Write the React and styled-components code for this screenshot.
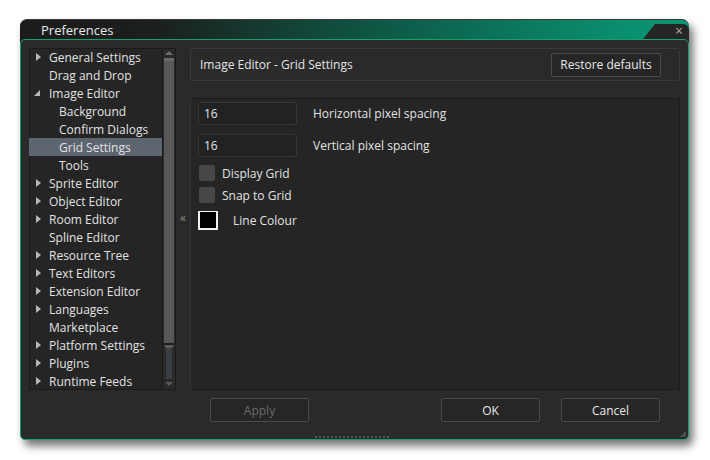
import React from "react";
import styled, { createGlobalStyle } from "styled-components";

const GlobalStyle = createGlobalStyle`
  html, body {
    margin: 0;
    padding: 0;
    background: #ffffff;
  }
  body {
    font-family: "Open Sans", "DejaVu Sans", sans-serif;
    font-size: 12px;
  }
`;

const Page = styled.div`
  width: 710px;
  height: 460px;
  padding: 19px 0 0 20px;
  box-sizing: border-box;
`;

const Window = styled.div`
  width: 669px;
  height: 421px;
  display: flex;
  flex-direction: column;
  border-radius: 7px 7px 6px 6px;
  box-shadow: 4px 6px 9px rgba(0, 0, 0, 0.55);
`;

const TitleBar = styled.div`
  position: relative;
  height: 27px;
  margin-bottom: -7px;
  padding-left: 21px;
  box-sizing: border-box;
  border-radius: 7px 7px 0 0;
  background: linear-gradient(to right, #1b1b1b 0%, #1b1f1e 20%, #0d5a47 55%, #0a8f6e 90%, #0b9572 100%);
  border-top: 1px solid #3a3a3a;
`;

const Title = styled.div`
  color: #e8e8e8;
  font-size: 13px;
  line-height: 21px;
`;

const CloseTab = styled.div`
  position: absolute;
  right: 0;
  top: 4px;
  width: 50px;
  height: 20px;
  background: #252525;
  border-top-right-radius: 6px;
  clip-path: polygon(16px 0, 100% 0, 100% 100%, 0 100%);
  color: #a8a8a8;
  font-size: 14px;
  line-height: 14px;
  text-align: right;
  padding-right: 6px;
  box-sizing: border-box;
`;

const Body = styled.div`
  position: relative;
  flex: 1;
  display: flex;
  flex-direction: column;
  background: #2a2a2a;
  border: 1px solid #17a06c;
  border-radius: 5px;
  padding: 8px 8px 0 8px;
`;

const Main = styled.div`
  display: flex;
  height: 342px;
`;

const Tree = styled.div`
  width: 147px;
  display: flex;
  background: #252525;
  box-shadow: inset 0 0 0 1px #1b1b1b;
`;

const TreeList = styled.div`
  flex: 1;
`;

const Row = styled.div`
  height: 18px;
  display: flex;
  align-items: center;
  padding-left: ${(p) => (p.child ? 30 : 20)}px;
  position: relative;
  color: #e2e2e2;
  background: ${(p) => (p.selected ? "#5d6571" : "transparent")};
  white-space: nowrap;
`;

const Arrow = styled.span`
  position: absolute;
  left: 7px;
  top: 5px;
  width: 0;
  height: 0;
  border-top: 4px solid transparent;
  border-bottom: 4px solid transparent;
  border-left: 5px solid #b8b8b8;
`;

const OpenArrow = styled.span`
  position: absolute;
  left: 5px;
  top: 6px;
  width: 0;
  height: 0;
  border-left: 6px solid transparent;
  border-bottom: 6px solid #b8b8b8;
`;

const ScrollBar = styled.div`
  width: 12px;
  display: flex;
  flex-direction: column;
  align-items: center;
  background: #2a2a2a;
  border: 1px solid #1b1b1b;
`;

const ScrollUp = styled.div`
  margin-top: 2px;
  width: 0;
  height: 0;
  border-left: 4px solid transparent;
  border-right: 4px solid transparent;
  border-bottom: 4px solid #6c6c6c;
`;

const ScrollDown = styled.div`
  margin: 3px 0 3px;
  width: 0;
  height: 0;
  border-left: 4px solid transparent;
  border-right: 4px solid transparent;
  border-top: 4px solid #5a5a5a;
`;

const Thumb = styled.div`
  margin-top: 3px;
  width: 10px;
  height: 287px;
  background: #585858;
  border-top: 3px solid #6a6a6a;
  border-bottom: 2px solid #1e1e1e;
  box-sizing: border-box;
`;

const TrackRest = styled.div`
  flex: 1;
  width: 10px;
  background: #3a3f46;
  border-top: 3px solid #5c5c5c;
  box-sizing: border-box;
  border-left: 2px solid #2a2a2a;
  border-right: 2px solid #2a2a2a;
`;

const Splitter = styled.div`
  width: 14px;
  display: flex;
  align-items: center;
  justify-content: center;
  color: #8a8a8a;
  font-size: 12px;
  padding-bottom: 4px;
`;

const RightCol = styled.div`
  width: 490px;
  display: flex;
  flex-direction: column;
  gap: 17px;
`;

const Header = styled.div`
  height: 33px;
  display: flex;
  align-items: center;
  justify-content: space-between;
  padding: 0 18px 0 9px;
  border: 1px solid #3a3a3a;
  border-radius: 2px;
  box-sizing: border-box;
  color: #e2e2e2;
`;

const Button = styled.button`
  width: ${(p) => p.w || 99}px;
  height: 24px;
  background: #262626;
  border: 1px solid #4a4a4a;
  border-radius: 2px;
  color: ${(p) => (p.disabled ? "#6a6a6a" : "#e8e8e8")};
  font-family: "Open Sans", "DejaVu Sans", sans-serif;
  font-size: 12px;
  padding: 0;
`;

const Content = styled.div`
  flex: 1;
  background: #252525;
  border: 1px solid #1b1b1b;
  border-left-color: #343434;
  box-sizing: border-box;
  padding: 3px 7px;
  display: flex;
  flex-direction: column;
`;

const FieldRow = styled.div`
  display: flex;
  align-items: center;
  height: 23px;
  margin-bottom: 9px;
  color: #e2e2e2;
`;

const Input = styled.div`
  width: 99px;
  height: 23px;
  box-sizing: border-box;
  background: #222222;
  border: 1px solid #363636;
  border-radius: 2px;
  padding-left: 5px;
  display: flex;
  align-items: center;
  color: #e2e2e2;
  margin-right: 16px;
`;

const CheckRow = styled.div`
  display: flex;
  align-items: center;
  height: 22px;
  color: #e2e2e2;
  margin-top: ${(p) => p.top || 0}px;
`;

const Box = styled.div`
  width: 16px;
  height: 16px;
  margin-left: 1px;
  margin-right: 7px;
  background: #474747;
  border-radius: 2px;
`;

const Swatch = styled.div`
  width: 20px;
  height: 19px;
  box-sizing: border-box;
  background: #000;
  border: 2px solid #f2f2f2;
  border-top-width: 1px;
  margin-right: 15px;
`;

const Footer = styled.div`
  display: flex;
  align-items: center;
  padding: 8px 20px 0 181px;
  gap: 21px;
`;

const Spacer = styled.div`
  flex: 1;
`;

const Grip = styled.div`
  position: absolute;
  left: 294px;
  bottom: 1px;
  width: 76px;
  height: 2px;
  background: repeating-linear-gradient(to right, #555 0 2px, transparent 2px 4px);
`;

const Corner = styled.div`
  position: absolute;
  right: 2px;
  bottom: 2px;
  width: 6px;
  height: 6px;
  background: linear-gradient(135deg, transparent 50%, #4a4a4a 50%);
`;

const items = [
  { label: "General Settings", arrow: true },
  { label: "Drag and Drop" },
  { label: "Image Editor", open: true },
  { label: "Background", child: true },
  { label: "Confirm Dialogs", child: true },
  { label: "Grid Settings", child: true, selected: true },
  { label: "Tools", child: true },
  { label: "Sprite Editor", arrow: true },
  { label: "Object Editor", arrow: true },
  { label: "Room Editor", arrow: true },
  { label: "Spline Editor" },
  { label: "Resource Tree", arrow: true },
  { label: "Text Editors", arrow: true },
  { label: "Extension Editor", arrow: true },
  { label: "Languages", arrow: true },
  { label: "Marketplace" },
  { label: "Platform Settings", arrow: true },
  { label: "Plugins", arrow: true },
  { label: "Runtime Feeds", arrow: true },
];

export default function App() {
  return (
    <Page>
      <GlobalStyle />
      <Window>
        <TitleBar>
          <Title>Preferences</Title>
          <CloseTab>×</CloseTab>
        </TitleBar>
        <Body>
          <Main>
            <Tree>
              <TreeList>
                {items.map((it) => (
                  <Row key={it.label} child={it.child} selected={it.selected}>
                    {it.arrow && <Arrow />}
                    {it.open && <OpenArrow />}
                    {it.label}
                  </Row>
                ))}
              </TreeList>
              <ScrollBar>
                <ScrollUp />
                <Thumb />
                <TrackRest />
                <ScrollDown />
              </ScrollBar>
            </Tree>
            <Splitter>«</Splitter>
            <RightCol>
              <Header>
                <span>Image Editor - Grid Settings</span>
                <Button w={110}>Restore defaults</Button>
              </Header>
              <Content>
                <FieldRow>
                  <Input>16</Input>
                  Horizontal pixel spacing
                </FieldRow>
                <FieldRow>
                  <Input>16</Input>
                  Vertical pixel spacing
                </FieldRow>
                <CheckRow top={-4}>
                  <Box />
                  Display Grid
                </CheckRow>
                <CheckRow>
                  <Box />
                  Snap to Grid
                </CheckRow>
                <CheckRow top={3}>
                  <Swatch />
                  Line Colour
                </CheckRow>
              </Content>
            </RightCol>
          </Main>
          <Footer>
            <Button disabled>Apply</Button>
            <Spacer />
            <Button>OK</Button>
            <Button>Cancel</Button>
          </Footer>
          <Grip />
          <Corner />
        </Body>
      </Window>
    </Page>
  );
}
